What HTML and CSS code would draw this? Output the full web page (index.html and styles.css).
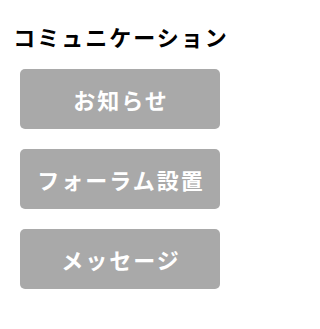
FILE: index.html
```html
<!DOCTYPE html>
<html lang="ja">
<head>
<meta charset="utf-8">
<link rel="stylesheet" href="styles.css">
</head>
<body>
<main class="panel">
  <h1 class="title">コミュニケーション</h1>
  <nav class="menu">
    <a class="btn" href="#">お知らせ</a>
    <a class="btn" href="#">フォーラム設置</a>
    <a class="btn" href="#">メッセージ</a>
  </nav>
</main>
</body>
</html>
```
FILE: styles.css
```css
html, body {
  margin: 0;
  padding: 0;
  background: #ffffff;
}
body {
  font-family: "Noto Sans CJK JP", "Noto Sans", sans-serif;
  width: 240px;
  height: 329px;
}
.panel {
  display: flex;
  flex-direction: column;
  align-items: center;
  padding-top: 21px;
}
.title {
  margin: 0 0 18px 0;
  font-size: 22px;
  line-height: 30px;
  font-weight: 700;
  color: #000000;
  letter-spacing: 2px;
  text-indent: 2px;
  white-space: nowrap;
}
.menu {
  display: flex;
  flex-direction: column;
  gap: 20px;
}
.btn {
  display: flex;
  align-items: center;
  justify-content: center;
  width: 200px;
  height: 60px;
  border-radius: 5px;
  background: #a9a9a9;
  color: #ffffff;
  text-decoration: none;
  font-size: 22px;
  font-weight: 700;
  letter-spacing: 2px;
  text-indent: 2px;
  white-space: nowrap;
}
```
